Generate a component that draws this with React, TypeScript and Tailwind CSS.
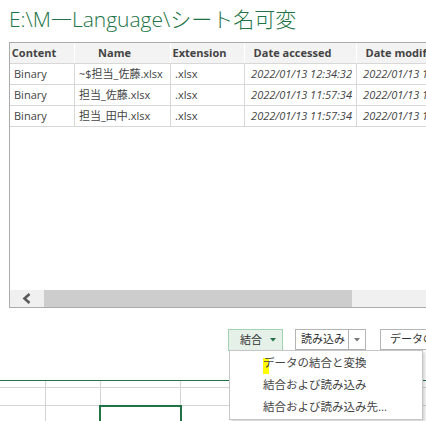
import React from "react";

const FONT = "font-['Open_Sans','Noto_Sans_CJK_JP',sans-serif]";

type Row = { c: string; n: string; e: string; a: string; m: string };
const rows: Row[] = [
  { c: "Binary", n: "~$担当_佐藤.xlsx", e: ".xlsx", a: "2022/01/13 12:34:32", m: "2022/01/13 12:34:32" },
  { c: "Binary", n: "担当_佐藤.xlsx", e: ".xlsx", a: "2022/01/13 11:57:34", m: "2022/01/13 11:57:34" },
  { c: "Binary", n: "担当_田中.xlsx", e: ".xlsx", a: "2022/01/13 11:57:34", m: "2022/01/13 11:57:34" },
];

function HeaderCell({ w, label }: { w: string; label: string }) {
  return (
    <div className={`${w} shrink-0 h-full flex items-center justify-center pr-[16px] border-r border-white font-bold text-[11px] text-[#444] whitespace-nowrap`}>
      {label}
    </div>
  );
}

export default function App() {
  return (
    <div className={`w-[426px] h-[421px] overflow-hidden bg-white relative ${FONT}`}>
      {/* Title */}
      <div className="h-[42px] pl-[9px] pt-[7px]">
        <div className="text-[21px] leading-[25px] font-light text-[#217346] whitespace-nowrap">
          E:\M一Language\シート名可変
        </div>
      </div>

      {/* Table frame */}
      <div className="ml-[9px] w-[600px] h-[266px] border-l border-t border-b border-[#ababab] flex flex-col">
        <div className="h-[21px] shrink-0 flex bg-[#f3f3f3] border-b border-[#d8d8d8]">
          <HeaderCell w="w-[65px]" label="Content" />
          <HeaderCell w="w-[96px]" label="Name" />
          <HeaderCell w="w-[74px]" label="Extension" />
          <HeaderCell w="w-[112px]" label="Date accessed" />
          <HeaderCell w="w-[112px]" label="Date modified" />
        </div>
        {rows.map((r, i) => (
          <div key={i} className="h-[21px] shrink-0 flex border-b border-[#d8d8d8] text-[11px] text-[#444] whitespace-nowrap">
            <div className="w-[65px] shrink-0 h-full flex items-center pl-[4px] border-r border-[#d8d8d8]">{r.c}</div>
            <div className="w-[96px] shrink-0 h-full flex items-center pl-[4px] border-r border-[#d8d8d8] overflow-hidden">{r.n}</div>
            <div className="w-[74px] shrink-0 h-full flex items-center pl-[4px] border-r border-[#d8d8d8]">{r.e}</div>
            <div className="w-[112px] shrink-0 h-full flex items-center justify-end pr-[4px] border-r border-[#d8d8d8] italic">{r.a}</div>
            <div className="w-[112px] shrink-0 h-full flex items-center justify-end pr-[4px] border-r border-[#d8d8d8] italic">{r.m}</div>
          </div>
        ))}
        <div className="flex-1" />
        {/* Horizontal scrollbar */}
        <div className="h-[17px] shrink-0 flex bg-[#f0f0f0]">
          <div className="w-[34px] shrink-0 h-full flex items-center justify-center">
            <svg width="10" height="11" viewBox="0 0 10 11">
              <path d="M7.5 1 L2.5 5.5 L7.5 10" fill="none" stroke="#5a5a5a" strokeWidth="2.6" />
            </svg>
          </div>
          <div className="w-[308px] shrink-0 h-full bg-[#cdcdcd]" />
        </div>
      </div>

      {/* Buttons row */}
      <div className="mt-[21px] h-[22px] flex pl-[228px] text-[11px] text-[#333] whitespace-nowrap">
        <div className="w-[55px] shrink-0 h-full flex items-center pl-[11px] gap-[8px] bg-[#e5f1e8] border border-[#a3d3b1]">
          <span>結合</span>
          <svg width="6" height="4" viewBox="0 0 6 4">
            <path d="M0 0 H6 L3 3.5 Z" fill="#217346" />
          </svg>
        </div>
        <div className="ml-[12px] shrink-0 h-[21px] flex border border-[#b4b4b4] bg-white">
          <div className="w-[53px] shrink-0 h-full flex items-center pl-[5px] border-r border-[#b4b4b4]">読み込み</div>
          <div className="w-[16px] shrink-0 h-full flex items-center justify-center">
            <svg width="6" height="4" viewBox="0 0 6 4">
              <path d="M0 0 H6 L3 3.5 Z" fill="#777" />
            </svg>
          </div>
        </div>
        <div className="ml-[14px] shrink-0 w-[80px] h-[21px] flex items-center pl-[9px] border border-[#b4b4b4] bg-white">
          データの結合
        </div>
      </div>

      {/* Excel grid */}
      <div className="mt-[29px] relative border-t border-[#217346]">
        <div className="h-[7px] flex border-b border-[#d4d4d4]">
          <div className="w-[46px] h-full border-r border-[#d4d4d4]" />
          <div className="w-[55px] h-full border-r border-[#d4d4d4]" />
          <div className="w-[80px] h-full border-r border-[#d4d4d4]" />
        </div>
        <div className="h-[18px] flex border-b border-[#d4d4d4]">
          <div className="w-[46px] h-full border-r border-[#d4d4d4]" />
          <div className="w-[55px] h-full border-r border-[#d4d4d4]" />
          <div className="w-[80px] h-full border-r border-[#d4d4d4]" />
        </div>
        <div className="h-[20px] flex">
          <div className="w-[46px] h-full border-r border-[#d4d4d4]" />
          <div className="w-[55px] h-full border-r border-[#d4d4d4]" />
          <div className="w-[80px] h-full border-r border-[#d4d4d4]" />
        </div>
        <div className="absolute left-[99px] top-[24px] w-[83px] h-[20px] border-t-[2px] border-l-[2px] border-r-[2px] border-[#217346]" />
      </div>

      {/* Dropdown menu */}
      <div className="absolute left-[229px] top-[350px] w-[194px] h-[70px] bg-white border border-[#c6c6c6] shadow-[2px_2px_3px_rgba(0,0,0,0.18)] pt-[1px] text-[11.5px] text-[#444] whitespace-nowrap">
        <div className="relative h-[22px] flex items-center pl-[33px]">
          <div className="absolute left-[33px] top-[6px] w-[6px] h-[16px] bg-[#ffff00]" />
          <span className="relative">データの結合と変換</span>
        </div>
        <div className="h-[22px] flex items-center pl-[33px]">結合および読み込み</div>
        <div className="h-[22px] flex items-center pl-[33px]">結合および読み込み先...</div>
      </div>
    </div>
  );
}
